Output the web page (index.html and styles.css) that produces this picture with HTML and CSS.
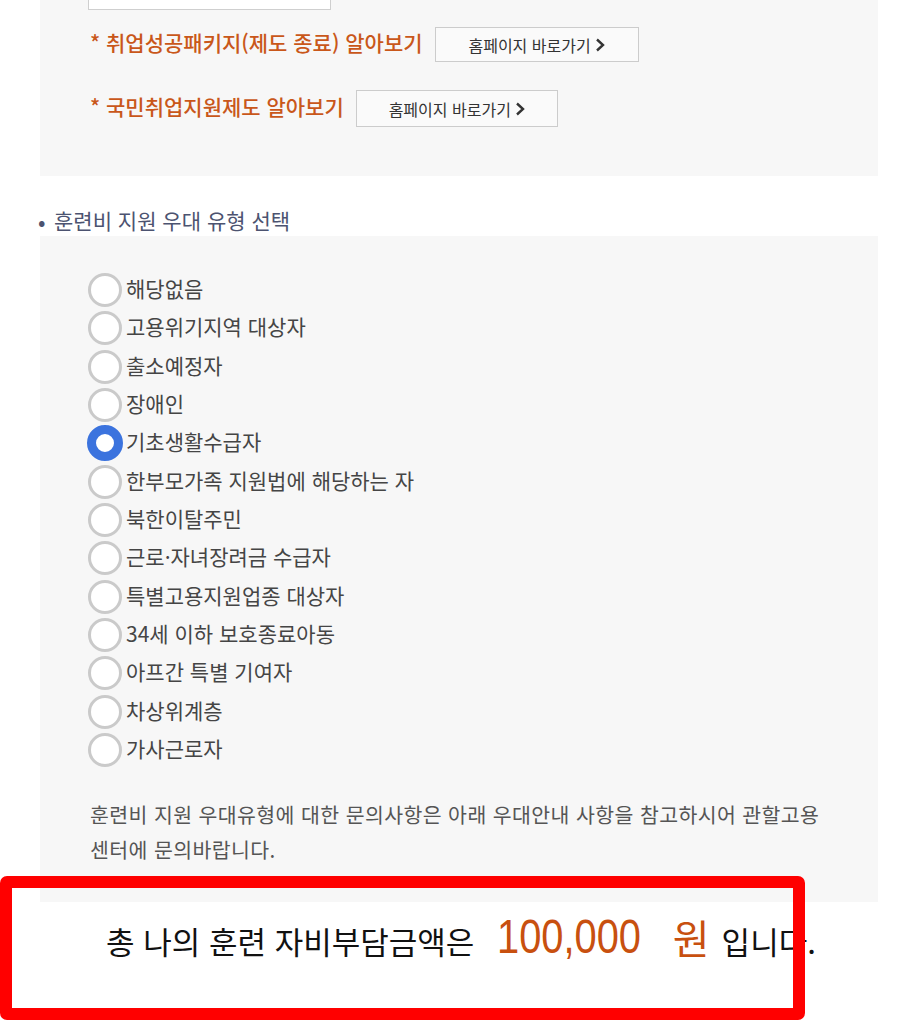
FILE: index.html
```html
<!DOCTYPE html>
<html lang="ko">
<head>
<meta charset="utf-8">
<title>훈련비 지원 우대 유형 선택</title>
<link rel="stylesheet" href="styles.css">
</head>
<body>
<div class="page">
  <section class="panel panel-links">
    <div class="input-stub"></div>
    <div class="link-row row-1">
      <span class="link-label">* 취업성공패키지(제도 종료) 알아보기</span>
      <a class="btn btn-1" href="#">홈페이지 바로가기 <svg class="chev" width="10" height="14" viewBox="0 0 10 14"><path d="M2 1.5 L8 7 L2 12.5" fill="none" stroke="#333" stroke-width="2.4"/></svg></a>
    </div>
    <div class="link-row row-2">
      <span class="link-label">* 국민취업지원제도 알아보기</span>
      <a class="btn btn-2" href="#">홈페이지 바로가기 <svg class="chev" width="10" height="14" viewBox="0 0 10 14"><path d="M2 1.5 L8 7 L2 12.5" fill="none" stroke="#333" stroke-width="2.4"/></svg></a>
    </div>
  </section>

  <h3 class="sec-title"><span class="dot">•</span>훈련비 지원 우대 유형 선택</h3>

  <section class="panel panel-radios">
    <ul class="radio-list">
      <li><label><input type="radio" name="t" class="radio"><span>해당없음</span></label></li>
      <li><label><input type="radio" name="t" class="radio"><span>고용위기지역 대상자</span></label></li>
      <li><label><input type="radio" name="t" class="radio"><span>출소예정자</span></label></li>
      <li><label><input type="radio" name="t" class="radio"><span>장애인</span></label></li>
      <li><label><input type="radio" name="t" class="radio" checked><span>기초생활수급자</span></label></li>
      <li><label><input type="radio" name="t" class="radio"><span>한부모가족 지원법에 해당하는 자</span></label></li>
      <li><label><input type="radio" name="t" class="radio"><span>북한이탈주민</span></label></li>
      <li><label><input type="radio" name="t" class="radio"><span>근로·자녀장려금 수급자</span></label></li>
      <li><label><input type="radio" name="t" class="radio"><span>특별고용지원업종 대상자</span></label></li>
      <li><label><input type="radio" name="t" class="radio"><span>34세 이하 보호종료아동</span></label></li>
      <li><label><input type="radio" name="t" class="radio"><span>아프간 특별 기여자</span></label></li>
      <li><label><input type="radio" name="t" class="radio"><span>차상위계층</span></label></li>
      <li><label><input type="radio" name="t" class="radio"><span>가사근로자</span></label></li>
    </ul>
    <p class="note">훈련비 지원 우대유형에 대한 문의사항은 아래 우대안내 사항을 참고하시어 관할고용<br>센터에 문의바랍니다.</p>
  </section>

  <div class="total">
    <span class="total-text">총 나의 훈련 자비부담금액은</span>
    <span class="amount">100,000</span>
    <span class="won">원</span>
    <span class="total-text tail">입니다.</span>
  </div>

  <div class="highlight"></div>
</div>
</body>
</html>
```

FILE: styles.css
```css
html, body {
  margin: 0;
  padding: 0;
  background: #ffffff;
}
body {
  font-family: "Noto Sans CJK KR", "Noto Sans", sans-serif;
  color: #444;
}
.page {
  position: relative;
  width: 902px;
  height: 1034px;
  overflow: hidden;
}
.panel {
  margin-left: 40px;
  width: 838px;
  background: #f7f7f7;
  box-sizing: border-box;
}
.panel-links {
  height: 176px;
  padding-left: 48px;
  display: flex;
  flex-direction: column;
}
.input-stub {
  width: 243px;
  height: 10px;
  background: #fff;
  border: 1px solid #cfcfcf;
  border-top: none;
  box-sizing: border-box;
}
.link-row {
  display: flex;
  align-items: center;
  padding-left: 2px;
  gap: 12px;
}
.row-1 { margin-top: 17px; }
.row-2 { margin-top: 28px; }
.link-label {
  font-size: 21px;
  font-weight: 500;
  color: #c9571a;
  letter-spacing: 0;
  line-height: 1;
  position: relative;
  top: -2px;
}
.btn {
  display: flex;
  align-items: center;
  justify-content: center;
  gap: 4px;
  box-sizing: border-box;
  border: 1px solid #cccccc;
  background: #fafafa;
  color: #333;
  text-decoration: none;
  font-size: 16px;
}
.btn-1 { width: 204px; height: 35px; }
.btn-2 { width: 202px; height: 37px; }
.chev { display: block; margin-top: 1px; }

.sec-title {
  margin: 0;
  height: 60px;
  display: flex;
  align-items: center;
  padding-left: 38px;
  padding-top: 28px;
  box-sizing: border-box;
  font-size: 21px;
  font-weight: 400;
  color: #4c5370;
}
.sec-title .dot {
  display: inline-block;
  width: 16px;
  font-size: 22px;
  color: #4c5370;
}

.panel-radios {
  height: 666px;
  padding: 37px 0 0 48px;
}
.radio-list {
  list-style: none;
  margin: 0;
  padding: 0;
}
.radio-list li {
  height: 38.33px;
  display: flex;
  align-items: flex-start;
}
.radio-list label {
  display: flex;
  align-items: center;
  height: 34px;
  font-size: 21px;
  color: #454545;
  letter-spacing: 0;
}
.radio-list label span {
  position: relative;
  top: -2px;
}
.radio {
  -webkit-appearance: none;
  appearance: none;
  margin: 0 4px 0 0;
  width: 34px;
  height: 34px;
  border-radius: 50%;
  border: 3px solid #cacaca;
  background: #fff;
  box-sizing: border-box;
  flex: none;
}
.radio:checked {
  width: 36px;
  height: 36px;
  margin-left: -1px;
  margin-right: 3px;
  border: 9px solid #3b73de;
}
.note {
  margin: 26px 0 0 2px;
  font-size: 20.5px;
  line-height: 35px;
  color: #555;
  letter-spacing: 0.4px;
}

.total {
  height: 76px;
  display: flex;
  align-items: center;
  padding-left: 106px;
  color: #111;
}
.total-text {
  font-size: 31px;
  letter-spacing: 0;
}
.amount {
  display: inline-block;
  font-family: "Liberation Sans", sans-serif;
  font-size: 48px;
  color: #c8500f;
  margin-left: 23px;
  margin-right: -29px;
  margin-bottom: 8px;
  transform: scaleX(0.83);
  transform-origin: left center;
}
.won {
  font-size: 40px;
  color: #c8500f;
  margin-left: 31px;
  margin-bottom: 6px;
}
.tail {
  margin-left: 12px;
}
.highlight {
  position: absolute;
  left: 0;
  top: 876px;
  width: 805px;
  height: 144px;
  box-sizing: border-box;
  border: 12px solid #ff0000;
  border-radius: 7px;
  pointer-events: none;
}
```
